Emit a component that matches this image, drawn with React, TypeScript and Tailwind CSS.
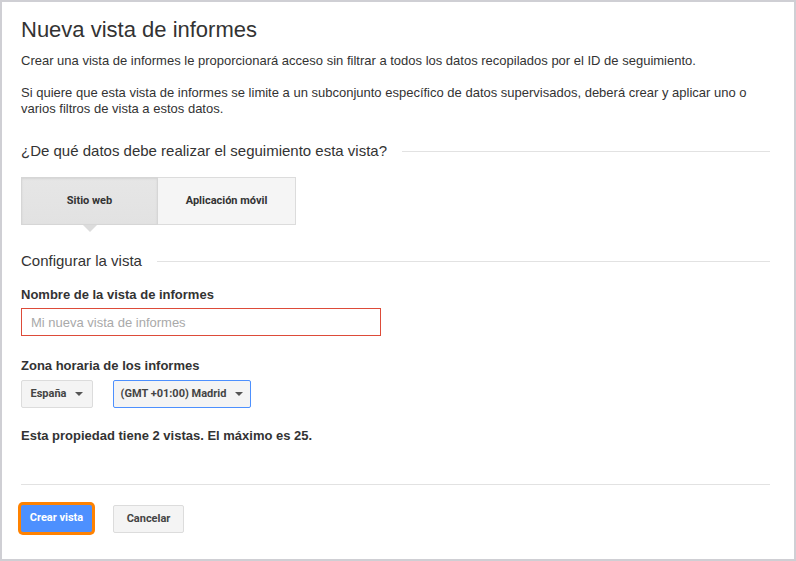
// New reporting view form (Analytics admin style)

const TEXT = "font-['Liberation_Sans',Arial,sans-serif]";
const UI = "font-['Roboto','Liberation_Sans',Arial,sans-serif]";

function Caret() {
  return (
    <svg width="8" height="4" viewBox="0 0 8 4" className="ml-[9px]">
      <path d="M0 0 L8 0 L4 4 Z" fill="#555" />
    </svg>
  );
}

function SectionHeading({ children }: { children: string }) {
  return (
    <div className="flex items-center">
      <span className="text-[15px] leading-[18px] text-[#333]">{children}</span>
      <div className="ml-[15px] h-px flex-1 bg-[#e2e2e2]" />
    </div>
  );
}

export default function App() {
  return (
    <div
      className={`${TEXT} flex h-[561px] w-[796px] flex-col border-2 border-[#cfcfd4] bg-white pl-[19px] pr-[24px] text-[#333]`}
    >
      <h1 className="mt-[15px] text-[22px] leading-[26px] text-[#333]">
        Nueva vista de informes
      </h1>
      <p className="mt-[10px] text-[13px] leading-[16px]">
        Crear una vista de informes le proporcionará acceso sin filtrar a todos los datos
        recopilados por el ID de seguimiento.
      </p>
      <p className="mt-[16px] text-[13px] leading-[16px]">
        Si quiere que esta vista de informes se limite a un subconjunto específico de datos
        supervisados, deberá crear y aplicar uno o varios filtros de vista a estos datos.
      </p>

      <div className="mt-[25px]">
        <SectionHeading>¿De qué datos debe realizar el seguimiento esta vista?</SectionHeading>
      </div>

      {/* Property type toggle */}
      <div className={`${UI} mt-[17px] flex`}>
        <div className="relative">
          <button className="flex h-[48px] w-[137px] items-center justify-center border border-[#d6d6d6] bg-gradient-to-b from-[#e6e6e6] to-[#e2e2e2] text-[11px] font-bold text-[#333] shadow-[inset_0_1px_2px_rgba(0,0,0,0.08)]">
            Sitio web
          </button>
          <div className="absolute left-[62px] top-[48px] h-0 w-0 border-x-[7px] border-t-[7px] border-x-transparent border-t-[#dcdcdc]" />
        </div>
        <button className="-ml-px flex h-[48px] w-[139px] items-center justify-center border border-[#dcdcdc] bg-[#f5f5f5] text-[11px] font-bold text-[#333]">
          Aplicación móvil
        </button>
      </div>

      <div className="mt-[27px]">
        <SectionHeading>Configurar la vista</SectionHeading>
      </div>

      <label className="mt-[17px] text-[13px] font-bold leading-[16px] text-[#333]">
        Nombre de la vista de informes
      </label>
      <input
        placeholder="Mi nueva vista de informes"
        className="mt-[5px] h-[28px] w-[360px] border border-[#dd4b39] px-[9px] text-[13px] text-[#333] placeholder:text-[#a9a9a9] outline-none"
      />

      <label className="mt-[22px] text-[13px] font-bold leading-[16px] text-[#333]">
        Zona horaria de los informes
      </label>
      <div className={`${UI} mt-[6px] flex gap-[20px]`}>
        <button className="flex h-[28px] w-[72px] items-center justify-center rounded-[2px] border border-[#dcdcdc] bg-[#f4f4f4] text-[11px] font-bold text-[#444]">
          España
          <Caret />
        </button>
        <button className="flex h-[28px] w-[138px] items-center justify-center rounded-[2px] border border-[#4d90fe] bg-[#f4f4f4] text-[11px] font-bold text-[#444]">
          (GMT +01:00) Madrid
          <Caret />
        </button>
      </div>

      <p className="mt-[20px] text-[13px] font-bold leading-[16px] text-[#333]">
        Esta propiedad tiene 2 vistas. El máximo es 25.
      </p>

      <div className="mt-[40px] h-px bg-[#e2e2e2]" />

      <div className={`${UI} mt-[20px] flex gap-[21px]`}>
        <button className="h-[27px] w-[71px] rounded-[2px] bg-[#4d90fe] text-[11px] font-bold text-white ring-[3px] ring-[#ff8200]">
          Crear vista
        </button>
        <button className="h-[28px] w-[71px] rounded-[2px] border border-[#dcdcdc] bg-[#f4f4f4] text-[11px] font-bold text-[#444]">
          Cancelar
        </button>
      </div>
    </div>
  );
}
